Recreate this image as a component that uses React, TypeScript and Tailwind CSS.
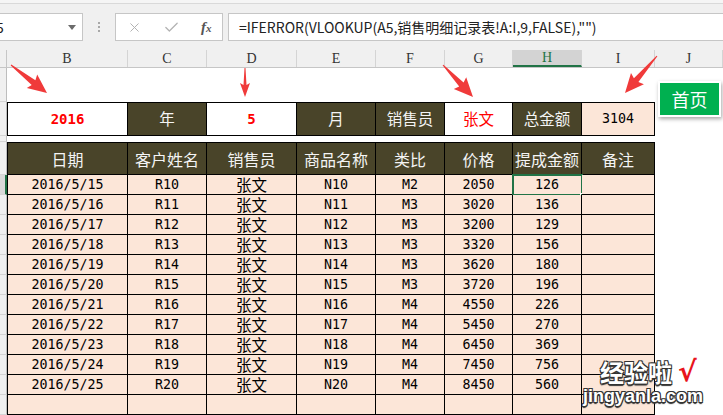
import clsx from "clsx";
import { Check, X } from "lucide-react";

const GRID = "grid grid-cols-[7px_121px_79px_90px_79px_69px_68px_69px_73px_68px]";
const MONO = "font-['DejaVu_Sans_Mono','Noto_Sans_CJK_SC',monospace] text-[13.3px]";
const CJK = "font-['Noto_Sans_CJK_SC',sans-serif] text-[15.5px]";

const rows = [
  ["2016/5/15", "R10", "N10", "M2", "2050", "126"],
  ["2016/5/16", "R11", "N11", "M3", "3020", "136"],
  ["2016/5/17", "R12", "N12", "M3", "3200", "129"],
  ["2016/5/18", "R13", "N13", "M3", "3320", "156"],
  ["2016/5/19", "R14", "N14", "M3", "3620", "180"],
  ["2016/5/20", "R15", "N15", "M3", "3720", "196"],
  ["2016/5/21", "R16", "N16", "M4", "4550", "226"],
  ["2016/5/22", "R17", "N17", "M4", "5450", "270"],
  ["2016/5/23", "R18", "N18", "M4", "6450", "369"],
  ["2016/5/24", "R19", "N19", "M4", "7450", "756"],
  ["2016/5/25", "R20", "N20", "M4", "8450", "560"],
];

const colLetters = ["B", "C", "D", "E", "F", "G", "H", "I", "J"];
const heads = ["日期", "客户姓名", "销售员", "商品名称", "类比", "价格", "提成金额", "备注"];

function arrowPoints(x1: number, y1: number, x2: number, y2: number, headLen: number, headW: number, shaftW: number, tailW: number) {
  const dx = x2 - x1;
  const dy = y2 - y1;
  const len = Math.hypot(dx, dy);
  const ux = dx / len;
  const uy = dy / len;
  const px = -uy;
  const py = ux;
  const bx = x2 - ux * headLen;
  const by = y2 - uy * headLen;
  // barbs sit a little behind the head base
  const wx = bx - ux * 2;
  const wy = by - uy * 2;
  const pts = [
    [x1 + (px * tailW) / 2, y1 + (py * tailW) / 2],
    [bx + (px * shaftW) / 2, by + (py * shaftW) / 2],
    [wx + (px * headW) / 2, wy + (py * headW) / 2],
    [x2, y2],
    [wx - (px * headW) / 2, wy - (py * headW) / 2],
    [bx - (px * shaftW) / 2, by - (py * shaftW) / 2],
    [x1 - (px * tailW) / 2, y1 - (py * tailW) / 2],
  ];
  return pts.map((p) => p.map((v) => v.toFixed(1)).join(",")).join(" ");
}

function RowHead({ active }: { active?: boolean }) {
  return (
    <div
      className={clsx(
        "border-b border-[#d4d4d4]",
        active ? "bg-[#d9d9d9] border-r-2 border-r-[#217346]" : "bg-[#f0f0f0] border-r border-r-[#bdbdbd]"
      )}
    />
  );
}

function Cell({
  children,
  first,
  cjk,
  selected,
}: {
  children?: React.ReactNode;
  first?: boolean;
  cjk?: boolean;
  selected?: boolean;
}) {
  return (
    <div
      className={clsx(
        "relative flex items-center justify-center border-r border-b border-black bg-[#fce6d8] text-black leading-none",
        first && "border-l",
        cjk ? CJK : MONO
      )}
    >
      {children}
      {selected && (
        <>
          <div className="absolute left-[-1px] top-[-1px] w-[71px] h-[22px] border-2 border-[#217346]" />
          <div className="absolute right-[-5px] bottom-[-5px] w-[6px] h-[6px] bg-[#217346] border border-white" />
        </>
      )}
    </div>
  );
}

function TopCell({ children, dark, tone, first }: { children?: React.ReactNode; dark?: boolean; tone?: string; first?: boolean }) {
  return (
    <div
      className={clsx(
        "flex items-center justify-center border-t border-r border-b border-black leading-none",
        first && "border-l",
        dark ? "bg-[#494429] text-[#f4f4f4]" : tone
      )}
    >
      {children}
    </div>
  );
}

export default function App() {
  return (
    <div className="relative w-[723px] h-[415px] overflow-hidden bg-white">
      {/* formula bar */}
      <div className="h-[50px] bg-[#f0f0f0]">
        <div className="h-[3px] bg-[#f5f5f5]" />
        <div className="border-t border-[#d9d9d9] pt-[9px] flex items-start">
          <div className="w-[83px] h-[28px] bg-white border border-l-0 border-[#c6c6c6] flex items-center justify-between pr-[6px]">
            <span className="-ml-[4px] text-[14px] text-[#222] font-['Noto_Sans_CJK_SC',sans-serif]">5</span>
            <span className="w-0 h-0 border-l-[4px] border-r-[4px] border-t-[5px] border-l-transparent border-r-transparent border-t-[#6b6b6b]" />
          </div>
          <div className="w-[32px] h-[28px] flex flex-col items-center justify-center gap-[2px]">
            <span className="w-[2px] h-[2px] bg-[#a8a8a8]" />
            <span className="w-[2px] h-[2px] bg-[#a8a8a8]" />
            <span className="w-[2px] h-[2px] bg-[#a8a8a8]" />
          </div>
          <div className="w-[108px] h-[28px] bg-white border border-[#c6c6c6] flex items-center justify-around">
            <X size={15} strokeWidth={1.6} className="text-[#b3b3b3]" />
            <Check size={17} strokeWidth={1.8} className="text-[#b3b3b3]" />
            <span className="italic font-bold font-['Liberation_Serif',serif] text-[15px] text-[#555] leading-none">
              f<span className="text-[11px]">x</span>
            </span>
          </div>
          <div className="ml-[5px] flex-1 h-[28px] bg-white border border-r-0 border-[#c6c6c6] flex items-center pl-[10px] text-[14px] text-[#222] font-['Noto_Sans_CJK_SC',sans-serif] whitespace-nowrap">
            =IFERROR(VLOOKUP(A5,销售明细记录表!A:I,9,FALSE),"")
          </div>
        </div>
      </div>

      {/* column headers */}
      <div className={`${GRID} h-[18px] bg-[#f0f0f0] border-b border-[#c6c6c6]`}>
        <div className="border-r border-[#c6c6c6]" />
        {colLetters.map((c) => (
          <div
            key={c}
            className={clsx(
              "flex items-center justify-center border-r border-[#d4d4d4] font-['Liberation_Serif',serif] text-[14px] leading-none",
              c === "H" ? "bg-[#d3d3d3] text-[#217346] border-b-2 border-b-[#217346]" : "text-[#333]"
            )}
          >
            {c}
          </div>
        ))}
      </div>

      {/* row: arrows */}
      <div className={`${GRID} h-[34px]`}>
        <RowHead />
      </div>

      {/* row: filter */}
      <div className={`${GRID} h-[34px]`}>
        <RowHead />
        <TopCell first tone={`bg-white text-[#ff0000] font-bold ${MONO} text-[14px]`}>2016</TopCell>
        <TopCell dark>
          <span className={CJK}>年</span>
        </TopCell>
        <TopCell tone={`bg-white text-[#ff0000] font-bold ${MONO} text-[14px]`}>5</TopCell>
        <TopCell dark>
          <span className={CJK}>月</span>
        </TopCell>
        <TopCell dark>
          <span className={CJK}>销售员</span>
        </TopCell>
        <TopCell tone="bg-white text-[#ff0000]">
          <span className={CJK}>张文</span>
        </TopCell>
        <TopCell dark>
          <span className={CJK}>总金额</span>
        </TopCell>
        <TopCell tone={`bg-[#fce6d8] text-black ${MONO}`}>3104</TopCell>
      </div>

      {/* gap row */}
      <div className={`${GRID} h-[6px]`}>
        <RowHead />
      </div>

      {/* table header */}
      <div className={`${GRID} h-[33px]`}>
        <RowHead />
        {heads.map((h, i) => (
          <TopCell key={h} dark first={i === 0}>
            <span className="font-['Noto_Sans_CJK_SC',sans-serif] text-[16px]">{h}</span>
          </TopCell>
        ))}
      </div>

      {/* data */}
      {rows.map((r, i) => (
        <div key={r[0]} className={`${GRID} h-[20px]`}>
          <RowHead active={i === 0} />
          <Cell first>{r[0]}</Cell>
          <Cell>{r[1]}</Cell>
          <Cell cjk>张文</Cell>
          <Cell>{r[2]}</Cell>
          <Cell>{r[3]}</Cell>
          <Cell>{r[4]}</Cell>
          <Cell selected={i === 0}>{r[5]}</Cell>
          <Cell />
        </div>
      ))}
      <div className={`${GRID} h-[20px]`}>
        <RowHead />
        <Cell first />
        <Cell />
        <Cell />
        <Cell />
        <Cell />
        <Cell />
        <Cell />
        <Cell />
      </div>

      {/* 首页 button shape */}
      <div className="absolute left-[658px] top-[81px] w-[63px] h-[36px] bg-[#00b050] border-2 border-white shadow-[1px_2px_4px_rgba(0,0,0,0.35)] flex items-center justify-center text-white text-[18px] leading-none font-['Noto_Sans_CJK_SC',sans-serif]">
        首页
      </div>

      {/* red arrows */}
      <svg className="absolute left-0 top-0 pointer-events-none" width={723} height={415}>
        <g fill="#f03a3a">
          <polygon points={arrowPoints(11, 65, 47, 93, 17, 17, 6, 1)} />
          <polygon points={arrowPoints(245, 68, 245, 97, 12, 10, 3, 1)} />
          <polygon points={arrowPoints(443, 65, 473, 97, 17, 17, 6, 1)} />
          <polygon points={arrowPoints(657, 56, 625, 93, 17, 17, 6, 1)} />
        </g>
      </svg>

      {/* watermark */}
      <div className="absolute left-[583px] top-[358px] flex flex-col items-start leading-none">
        <div className="flex items-center pl-[17px]">
          <span className="text-white text-[24px] font-bold font-['Noto_Sans_CJK_SC',sans-serif] [text-shadow:-1px_-1px_0_#333,1px_-1px_0_#333,-1px_1px_0_#333,1px_1px_0_#333,0_2px_1px_#333]">
            经验啦
          </span>
          <span className="ml-[6px] text-[#e8141c] text-[28px] font-bold font-['DejaVu_Sans',sans-serif]">√</span>
        </div>
        <span className="mt-[1px] text-white text-[18px] font-bold font-['Liberation_Sans',sans-serif] [text-shadow:-1px_-1px_0_#333,1px_-1px_0_#333,-1px_1px_0_#333,1px_1px_0_#333,0_2px_1px_#333]">
          jingyanla.com
        </span>
      </div>
    </div>
  );
}
